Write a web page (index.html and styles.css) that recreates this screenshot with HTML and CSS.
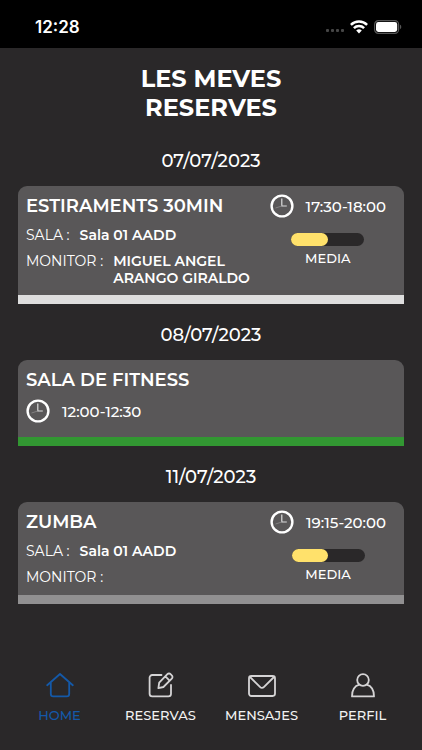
FILE: index.html
```html
<!DOCTYPE html>
<html lang="ca">
<head>
  <meta charset="UTF-8">
  <meta name="viewport" content="width=device-width, initial-scale=1.0">
  <title>Les meves reserves</title>
  <link rel="stylesheet" href="styles.css">
</head>
<body>
  <!-- Clock icon shared by all the cards -->
  <svg class="sprite" aria-hidden="true">
    <symbol id="clock" viewBox="0 0 24 24">
      <circle cx="12" cy="12" r="10.4" fill="none" stroke="#fff" stroke-width="2.4"/>
      <path d="M11.8 4.5V12h5" fill="none" stroke="#dcdcdc" stroke-width="1.2"/>
      <path d="M11.8 12l-6.3 2" fill="none" stroke="#8c8a8b" stroke-width="0.8"/>
    </symbol>
  </svg>

  <div class="status-bar">
    <span class="status-time">12:28</span>
    <div class="status-icons">
      <svg width="20" height="4" viewBox="0 0 20 4" fill="#464646">
        <rect x="2" y="0" width="3" height="3" rx="1"/>
        <rect x="7" y="0" width="3" height="3" rx="1"/>
        <rect x="12" y="0" width="3" height="3" rx="1"/>
        <rect x="17" y="0" width="3" height="3" rx="1"/>
      </svg>
      <svg class="wifi" width="18" height="14" viewBox="0 0 18 14" fill="none" stroke="#fff" stroke-width="2.5">
        <path d="M0.9 4.9a11.6 11.6 0 0 1 16.2 0"/>
        <path d="M3.9 8.2a7.3 7.3 0 0 1 10.2 0"/>
        <path d="M9 13.4L6.2 10.6a4 4 0 0 1 5.6 0z" fill="#fff" stroke="none"/>
      </svg>
      <svg width="28" height="14" viewBox="0 0 28 14">
        <rect x="0.6" y="0.6" width="24" height="12.8" rx="3.8" fill="none" stroke="#565656" stroke-width="1.2"/>
        <rect x="2" y="2" width="21.2" height="10" rx="2.4" fill="#fff"/>
        <path d="M26 4.8c1.7.6 1.7 3.8 0 4.4z" fill="#565656"/>
      </svg>
    </div>
  </div>

  <main>
    <h1>LES MEVES<br>RESERVES</h1>

    <h2>07/07/2023</h2>
    <article class="card">
      <div class="info">
        <h3>ESTIRAMENTS 30MIN</h3>
        <dl>
          <div class="row"><dt>SALA :</dt><dd>Sala 01 AADD</dd></div>
          <div class="row"><dt>MONITOR :</dt><dd>MIGUEL ANGEL ARANGO GIRALDO</dd></div>
        </dl>
      </div>
      <div class="side">
        <div class="time"><svg class="clock"><use href="#clock"/></svg><time>17:30-18:00</time></div>
        <div class="bar"><div class="fill" style="width: 50%"></div></div>
        <span class="level">MEDIA</span>
      </div>
    </article>

    <h2>08/07/2023</h2>
    <article class="card green">
      <div class="info">
        <h3>SALA DE FITNESS</h3>
        <div class="time"><svg class="clock"><use href="#clock"/></svg><time>12:00-12:30</time></div>
      </div>
    </article>

    <h2>11/07/2023</h2>
    <article class="card gray">
      <div class="info">
        <h3>ZUMBA</h3>
        <dl>
          <div class="row"><dt>SALA :</dt><dd>Sala 01 AADD</dd></div>
          <div class="row"><dt>MONITOR :</dt><dd></dd></div>
        </dl>
      </div>
      <div class="side">
        <div class="time"><svg class="clock"><use href="#clock"/></svg><time>19:15-20:00</time></div>
        <div class="bar"><div class="fill" style="width: 50%"></div></div>
        <span class="level">MEDIA</span>
      </div>
    </article>
  </main>

  <nav>
    <a href="#home" class="active">
      <svg viewBox="0 0 28 28">
        <path d="M1.2 13.2L14 2l12.8 11.2M4.8 10.500V22a2.4 2.4 0 0 0 2.4 2.4h13.600a2.4 2.4 0 0 0 2.4-2.4V10.500"/>
      </svg>
      HOME
    </a>
    <a href="#reservas">
      <svg viewBox="0 0 28 28">
        <path d="M14.5 3H5.2a2.6 2.6 0 0 0-2.6 2.6v16.2a2.6 2.6 0 0 0 2.6 2.6h16.2a2.6 2.6 0 0 0 2.6-2.6V13"/>
        <path d="M12.2 10.6L20.4 2.2a2.2 2.2 0 0 1 3.2 0l1.2 1.2a2.2 2.2 0 0 1 0 3.2L16.4 15l-5 1.2zM18.4 4.4l4.2 4.2"/>
      </svg>
      RESERVAS
    </a>
    <a href="#mensajes">
      <svg viewBox="0 0 28 28">
        <rect x="1" y="4" width="26" height="20" rx="2.4"/>
        <path d="M2 5l10.2 10.2a2.5 2.5 0 0 0 3.6 0L26 5"/>
      </svg>
      MENSAJES
    </a>
    <a href="#perfil">
      <svg viewBox="0 0 28 28">
        <circle cx="14" cy="8" r="5.8"/>
        <path d="M10.4 12.6C6 13.8 3 17.6 3 24.4h22c0-6.8-3-10.6-7.4-11.8"/>
      </svg>
      PERFIL
    </a>
  </nav>
</body>
</html>
```
FILE: styles.css
```css
* {
  box-sizing: border-box;
}

body {
  margin: 0;
  min-height: 100vh;
  display: flex;
  flex-direction: column;
  font-family: Montserrat, Inter, sans-serif;
  background-color: #2a2829;
  color: #fff;
}

.sprite {
  display: none;
}

.status-bar {
  display: flex;
  justify-content: space-between;
  align-items: center;
  height: 48px;
  padding: 6px 20px 0 35px;
  background-color: #000;
}

.status-time {
  font-family: Inter, sans-serif;
  font-size: 17px;
  font-weight: 600;
}

.status-icons {
  display: flex;
  align-items: center;
  gap: 6px;
}

.status-icons svg:first-child {
  margin-top: 8px;
}

main {
  flex: 1;
  padding: 16px 18px;
}

h1 {
  margin: 0 0 8px;
  font-size: 24px;
  line-height: 29px;
  font-weight: 700;
  text-align: center;
}

h2 {
  margin: 0;
  padding: 20px 0 14px;
  font-size: 18px;
  line-height: 22px;
  font-weight: 500;
  text-align: center;
}

.card {
  display: flex;
  justify-content: space-between;
  padding: 8px 18px 8px 8px;
  background-color: #595758;
  border-bottom: 9px solid #dedede;
  border-radius: 9px 9px 0 0;
}

.card.green {
  padding-bottom: 14px;
  border-color: #329732;
}

.card.gray {
  padding-bottom: 9px;
  border-color: #919091;
}

.info {
  flex: 1;
}

h3 {
  margin: 0;
  font-size: 18px;
  line-height: 24px;
  font-weight: 600;
}

.info .time {
  margin-top: 7px;
}

dl {
  margin: 0;
}

.row {
  display: flex;
  gap: 10px;
  margin-top: 9px;
  font-size: 14px;
  line-height: 17px;
}

dt {
  white-space: nowrap;
}

dd {
  margin: 0;
  font-weight: 600;
}

.side {
  display: flex;
  flex-direction: column;
  align-items: center;
}

.time {
  display: flex;
  align-items: center;
  gap: 12px;
  height: 24px;
  font-size: 15px;
  font-weight: 500;
}

.clock {
  width: 24px;
  height: 24px;
}

.bar {
  width: 73px;
  height: 13px;
  margin: 15px 0 4px;
  border-radius: 7px;
  background-color: #2a2829;
}

.fill {
  height: 100%;
  border-radius: 7px;
  background-color: #ffe16b;
}

.level {
  font-size: 13px;
  line-height: 17px;
  font-weight: 500;
}

nav {
  display: flex;
  padding: 0 9px 26px;
}

nav a {
  flex: 1;
  display: flex;
  flex-direction: column;
  align-items: center;
  gap: 6px;
  font-size: 13px;
  line-height: 18px;
  font-weight: 500;
  color: #f2f2f2;
  text-decoration: none;
}

nav svg {
  width: 28px;
  height: 28px;
  fill: none;
  stroke: #d5d4d5;
  stroke-width: 1.8;
  stroke-linejoin: round;
  stroke-linecap: round;
}

nav a.active {
  color: #1459a8;
}

nav a.active svg {
  stroke: #1459a8;
}
```
